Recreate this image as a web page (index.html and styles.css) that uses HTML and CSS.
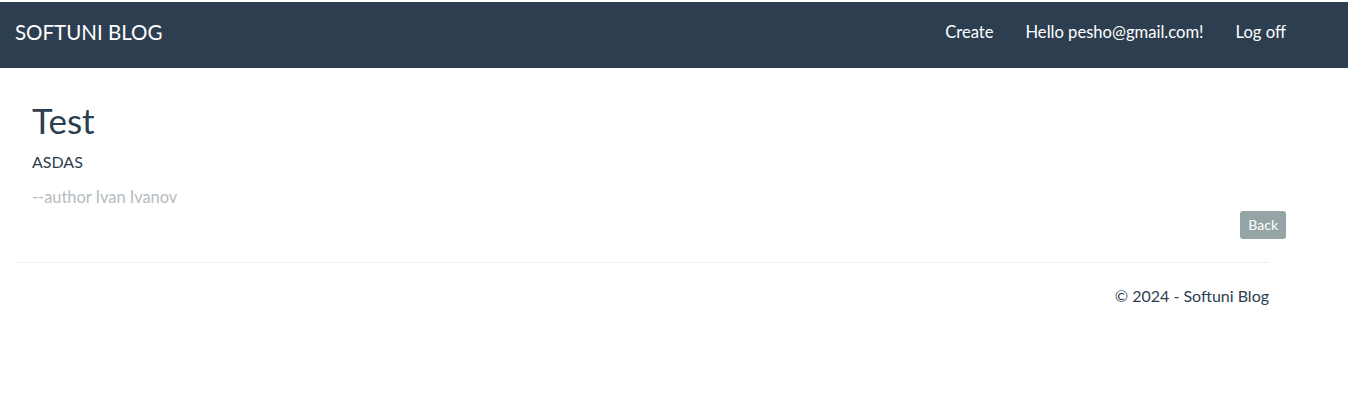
FILE: index.html
```html
<!DOCTYPE html>
<html>
<head>
<meta charset="utf-8">
<link rel="stylesheet" href="styles.css">
</head>
<body>
<nav class="navbar">
  <a class="brand" href="#">SOFTUNI BLOG</a>
  <ul class="nav">
    <li><a href="#">Create</a></li>
    <li><a href="#">Hello pesho@gmail.com!</a></li>
    <li><a href="#">Log off</a></li>
  </ul>
</nav>
<main class="content">
  <article class="post">
    <h2 class="title">Test</h2>
    <p class="body-text">ASDAS</p>
    <small class="author">--author Ivan Ivanov</small>
    <div class="actions"><a class="btn" href="#">Back</a></div>
  </article>
  <hr class="sep">
  <footer class="footer">© 2024 - Softuni Blog</footer>
</main>
</body>
</html>
```
FILE: styles.css
```css
html, body { margin: 0; padding: 0; }
body {
  padding-top: 2px;
  font-family: Lato, "Open Sans", sans-serif;
  font-size: 15px;
  color: #2c3e50;
  background: #fff;
}
a { text-decoration: none; }
.navbar {
  background: #2c3e50;
  height: 66px;
  box-sizing: border-box;
  display: flex;
  align-items: center;
  justify-content: space-between;
  padding: 0 46px 6px 15px;
}
.brand {
  color: #fff;
  font-size: 20.5px;
  line-height: 1;
}
.nav {
  list-style: none;
  margin: 0;
  padding: 0;
  display: flex;
}
.nav a {
  display: block;
  color: #fff;
  padding: 0 16px;
  font-size: 16.6px;
}
.content {
  padding: 0 62px 0 16px;
}
.post {
  padding: 0 0 0 16px;
}
.title {
  margin: 0;
  padding-top: 30px;
  font-size: 35px;
  font-weight: 400;
  line-height: 44px;
}
.body-text {
  margin: 9px 0 0;
  font-size: 16px;
  line-height: 22px;
}
.author {
  display: block;
  margin-top: 13px;
  font-size: 16.4px;
  line-height: 22px;
  color: #b4bcc2;
}
.actions {
  display: flex;
  justify-content: flex-end;
  margin-top: 3px;
}
.btn {
  display: block;
  background: #95a5a6;
  color: #fff;
  font-size: 14px;
  line-height: 18px;
  padding: 5px 8px;
  border-radius: 3px;
}
.sep {
  margin: 23px 17px 0 0;
  border: 0;
  border-top: 1px solid #ecf0f1;
}
.footer {
  text-align: right;
  margin-right: 17px;
  padding-top: 22px;
  font-size: 16px;
  line-height: 22px;
}
```
